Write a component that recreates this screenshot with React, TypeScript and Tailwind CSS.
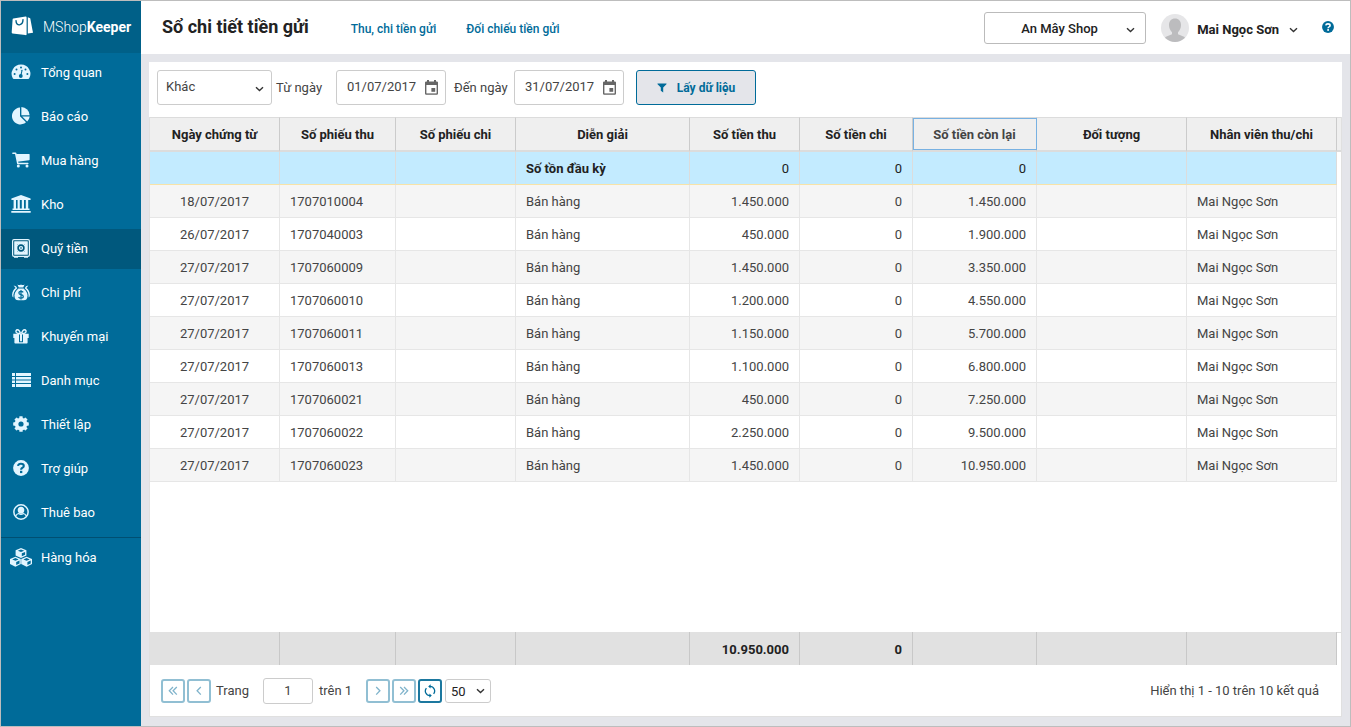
import React, { useState } from "react";

type IconProps = { className?: string };

const ICE = "#e2f5ff";
const NAVY = "#006b99";

function LogoIcon() {
  return (
    <svg width="22" height="20" viewBox="0 0 22 20" aria-hidden="true">
      <path d="M2.4 2.6 L14.6 0.6 Q15.6 0.5 15.6 1.5 V18.2 Q15.6 19.4 14.4 19.1 L1.5 17.4 Q0.6 17.2 0.7 16.2 L1.6 3.6 Q1.7 2.7 2.4 2.6Z" fill="#fff" />
      <path d="M5 4.6 C5 10.8 12 10 12 3.6" fill="none" stroke="#006088" strokeWidth="1.4" strokeLinecap="round" />
      <path d="M16.8 1.3 L19.2 2.2 L22 16.8 L16.8 17.6Z" fill="#fff" />
    </svg>
  );
}

function GaugeIcon() {
  return (
    <svg width="20" height="16" viewBox="0 0 20 16" aria-hidden="true">
      <path d="M10 0.5 A9.3 9.3 0 0 0 1.9 14.5 Q2.2 14.9 2.8 14.9 H17.2 Q17.8 14.9 18.1 14.5 A9.3 9.3 0 0 0 10 0.5Z" fill={ICE} />
      <g fill={NAVY}>
        <circle cx="3.6" cy="10" r="1" />
        <circle cx="5.5" cy="5.6" r="1" />
        <circle cx="10" cy="3.6" r="1" />
        <circle cx="14.5" cy="5.6" r="1" />
        <circle cx="16.4" cy="10" r="1" />
        <circle cx="9.8" cy="12" r="1.9" />
      </g>
      <path d="M9.8 12 L11 6.4" stroke={NAVY} strokeWidth="1.1" strokeLinecap="round" />
    </svg>
  );
}

function PieIcon() {
  return (
    <svg width="18" height="18" viewBox="0 0 18 18" fill={ICE} aria-hidden="true">
      <path d="M8 0.6 V9.3 L14 15.2 A8.4 8.4 0 1 1 8 0.6Z" />
      <path d="M9.4 0 A8.4 8.4 0 0 1 17.6 8.2 H9.4Z" />
      <path d="M10.2 9.4 H17.7 A8.4 8.4 0 0 1 15.2 14.4Z" />
    </svg>
  );
}

function CartIcon() {
  return (
    <svg width="18" height="16" viewBox="0 0 18 16" aria-hidden="true">
      <path d="M0.9 1.2 H3.6 L5.8 11.5 H15.8" fill="none" stroke={ICE} strokeWidth="1.5" strokeLinecap="round" strokeLinejoin="round" />
      <path d="M4 1.9 H17 Q17.6 1.9 17.6 2.5 V7.6 Q17.6 8.2 17 8.3 L5.4 9.7Z" fill={ICE} />
      <circle cx="6.3" cy="13.9" r="1.5" fill={ICE} />
      <circle cx="15" cy="13.9" r="1.5" fill={ICE} />
    </svg>
  );
}

function BankIcon() {
  return (
    <svg width="20" height="18" viewBox="0 0 20 18" fill={ICE} aria-hidden="true">
      <path d="M10 0 L19.6 3.6 V5 H0.4 V3.6Z" />
      <path d="M2.6 5 H5 V14 H2.6Z M6.6 5 H8.8 V14 H6.6Z M10.8 5 H13 V14 H10.8Z M14.8 5 H17.2 V14 H14.8Z" />
      <path d="M1.5 13.6 H18.5 V15 H1.5Z M0.3 16 H19.7 V17.8 H0.3Z" />
    </svg>
  );
}

function SafeIcon() {
  return (
    <svg width="18" height="19" viewBox="0 0 18 19" aria-hidden="true">
      <path d="M2 17 H6 V18.8 H2Z M12 17 H16 V18.8 H12Z" fill={ICE} />
      <rect x="0.6" y="0.6" width="16.8" height="16.8" rx="1.4" fill="#00587d" stroke={ICE} strokeWidth="1.2" />
      <rect x="2.2" y="2.2" width="13.6" height="13.6" rx="0.5" fill={ICE} />
      <circle cx="9" cy="9" r="2.9" fill="none" stroke="#00587d" strokeWidth="1.6" />
      <circle cx="9" cy="9" r="0.9" fill="#3d86a6" />
      <path d="M5.4 5.4 L6.4 6.4 M12.6 5.4 L11.6 6.4 M5.4 12.6 L6.4 11.6 M12.6 12.6 L11.6 11.6" stroke="#5c9ab5" strokeWidth="0.8" />
    </svg>
  );
}

function MoneyIcon() {
  return (
    <svg width="18" height="17" viewBox="0 0 18 17" aria-hidden="true">
      <path d="M5.4 0.6 Q7.2 1.6 9 0.6 Q10.8 1.6 12.6 0.6 L11.2 3.5 H6.8Z" fill={ICE} />
      <path d="M6.4 4.4 H11.6 C15 7.2 16.2 10.6 15.2 14 Q14.5 16.2 12 16.3 H6 Q3.5 16.2 2.8 14 C1.8 10.6 3 7.2 6.4 4.4Z" fill={ICE} />
      <path d="M1.6 1.4 L4 2.2 L5.2 4.2 C2.4 6.6 1 9.4 1.4 13.4 Q0 13 0.1 10.6 C0.4 7.4 1.8 5.4 3.6 4.1Z M16.4 1.4 L14 2.2 L12.8 4.2 C15.6 6.6 17 9.4 16.6 13.4 Q18 13 17.9 10.6 C17.6 7.4 16.2 5.4 14.4 4.1Z" fill={ICE} />
      <path d="M11.2 8.4 Q10.6 7.4 9 7.4 Q6.9 7.4 6.9 9 Q6.9 10.4 9 10.7 Q11.3 11 11.3 12.6 Q11.3 14.2 9 14.2 Q7.2 14.2 6.6 13 M9 6 V15.6" fill="none" stroke={NAVY} strokeWidth="1.2" />
    </svg>
  );
}

function GiftIcon() {
  return (
    <svg width="16" height="15" viewBox="0 0 16 15" aria-hidden="true">
      <path d="M7.6 4.6 C6.5 1.8 5.6 0.8 4.6 0.8 C2.9 0.8 2.5 2.6 3.4 3.6 C4.2 4.5 5.8 4.6 7.6 4.6 M8.4 4.6 C9.5 1.8 10.4 0.8 11.4 0.8 C13.1 0.8 13.5 2.6 12.6 3.6 C11.8 4.5 10.2 4.6 8.4 4.6" fill="none" stroke={ICE} strokeWidth="1.4" />
      <path d="M0.3 4.8 H15.7 V9 H14.6 V13.7 Q14.6 14.4 13.7 14.4 H2.3 Q1.4 14.4 1.4 13.7 V9 H0.3Z" fill={ICE} />
      <path d="M6 5.4 H7 V13 H6Z M9 5.4 H10 V13 H9Z M6 12.2 H10 V13.2 H6Z" fill={NAVY} />
    </svg>
  );
}

function ListIcon() {
  return (
    <svg width="19" height="14" viewBox="0 0 19 14" fill={ICE} aria-hidden="true">
      <path d="M0 0 H3 V3 H0Z M4 0 H19 V3 H4Z M0 4 H3 V6.4 H0Z M4 4 H19 V6.4 H4Z M0 7.4 H3 V10 H0Z M4 7.4 H19 V10 H4Z M0 11 H3 V14 H0Z M4 11 H19 V14 H4Z" />
    </svg>
  );
}

function CogIcon() {
  return (
    <svg width="16" height="16" viewBox="0 0 16 16" aria-hidden="true">
      <g fill={ICE}>
        <circle cx="8" cy="8" r="6.3" />
        <rect x="6.3" y="0.2" width="3.4" height="15.6" rx="0.6" />
        <rect x="0.2" y="6.3" width="15.6" height="3.4" rx="0.6" />
        <rect x="6.3" y="0.2" width="3.4" height="15.6" rx="0.6" transform="rotate(45 8 8)" />
        <rect x="6.3" y="0.2" width="3.4" height="15.6" rx="0.6" transform="rotate(-45 8 8)" />
      </g>
      <circle cx="8" cy="8" r="2.6" fill={NAVY} />
    </svg>
  );
}

function QuestionIcon({ size, disc, mark }: { size: number; disc: string; mark: string }) {
  return (
    <svg width={size} height={size} viewBox="0 0 16 16" aria-hidden="true">
      <circle cx="8" cy="8" r="7.9" fill={disc} />
      <path d="M5 5.9 Q5.4 3.8 7.9 3.8 Q10.8 3.8 10.8 6 Q10.8 7.1 9.4 7.8 Q8.1 8.4 8.1 9.8" fill="none" stroke={mark} strokeWidth="2.1" />
      <rect x="7" y="10.8" width="2.3" height="2.3" fill={mark} />
    </svg>
  );
}

function UserIcon() {
  return (
    <svg width="16" height="16" viewBox="0 0 17 17" aria-hidden="true">
      <circle cx="8.5" cy="8.5" r="7.6" fill="none" stroke={ICE} strokeWidth="1.6" />
      <path d="M8.5 3 C10.8 3 12 4.6 12 6.4 C12 8.6 10.6 10.4 8.5 10.4 C6.4 10.4 5 8.6 5 6.4 C5 4.6 6.2 3 8.5 3Z" fill={ICE} />
      <path d="M3 13 C3.4 11.2 4.4 10.3 6 10.1 Q8.5 12 11 10.1 C12.6 10.3 13.6 11.2 14 13" fill="none" stroke={ICE} strokeWidth="1.1" />
    </svg>
  );
}

function Cube({ x, y }: { x: number; y: number }) {
  return (
    <g transform={`translate(${x} ${y})`}>
      <path d="M5.4 0 L10.8 2.2 V7.4 L5.4 10 L0 7.4 V2.2Z" fill={ICE} />
      <path d="M5.4 1.4 L8.6 2.7 L5.4 4 L2.2 2.7Z M6.2 5.3 L9.5 3.9 V6.7 L6.2 8.3Z" fill={NAVY} />
    </g>
  );
}

function CubesIcon() {
  return (
    <svg width="22" height="19" viewBox="0 0 22 19" aria-hidden="true">
      <Cube x={5.6} y={0} />
      <Cube x={0} y={8.7} />
      <Cube x={11.2} y={8.7} />
    </svg>
  );
}

function Chevron({ className = "" }: IconProps) {
  return (
    <svg className={className} width="9" height="6" viewBox="0 0 9 6" aria-hidden="true">
      <path d="M1 1.2 L4.5 4.5 L8 1.2" fill="none" stroke="#333" strokeWidth="1.4" />
    </svg>
  );
}

function CalendarIcon() {
  return (
    <svg width="13" height="15" viewBox="0 0 13 15" aria-hidden="true">
      <path d="M2 0 H4 V1.4 H9 V0 H11 V1.4 H11.8 Q13 1.4 13 2.6 V13.6 Q13 14.8 11.8 14.8 H1.2 Q0 14.8 0 13.6 V2.6 Q0 1.4 1.2 1.4 H2Z" fill="#666" />
      <rect x="1.4" y="5" width="10.2" height="8.4" fill="#fff" />
      <rect x="6.4" y="8" width="3.8" height="3.8" fill="#666" />
    </svg>
  );
}

function AngleIcon({ double, flip }: { double?: boolean; flip?: boolean }) {
  return (
    <svg width="10" height="10" viewBox="0 0 10 10" aria-hidden="true">
      <g fill="none" stroke="#7fb3cb" strokeWidth="1.3" transform={flip ? "translate(10 0) scale(-1 1)" : undefined}>
        {double ? <path d="M5 1 L1.3 4.8 L5 8.6 M8.8 1 L5.1 4.8 L8.8 8.6" /> : <path d="M6.8 1 L3.1 4.8 L6.8 8.6" />}
      </g>
    </svg>
  );
}

function RefreshIcon() {
  return (
    <svg width="12" height="14" viewBox="0 0 12 14" aria-hidden="true">
      <path d="M6 2.4 A4.6 4.6 0 0 1 9.6 9.9 M6 11.6 A4.6 4.6 0 0 1 2.4 4.1" fill="none" stroke={NAVY} strokeWidth="1.3" />
      <path d="M6.6 0.2 V4.6 L4.2 2.4Z M5.4 13.8 V9.4 L7.8 11.6Z" fill={NAVY} />
    </svg>
  );
}

const menu = [
  { label: "Tổng quan", icon: <GaugeIcon /> },
  { label: "Báo cáo", icon: <PieIcon /> },
  { label: "Mua hàng", icon: <CartIcon /> },
  { label: "Kho", icon: <BankIcon /> },
  { label: "Quỹ tiền", icon: <SafeIcon />, active: true },
  { label: "Chi phí", icon: <MoneyIcon /> },
  { label: "Khuyến mại", icon: <GiftIcon /> },
  { label: "Danh mục", icon: <ListIcon /> },
  { label: "Thiết lập", icon: <CogIcon /> },
  { label: "Trợ giúp", icon: <QuestionIcon size={16} disc={ICE} mark={NAVY} /> },
  { label: "Thuê bao", icon: <UserIcon /> },
];

const columns = [
  "Ngày chứng từ",
  "Số phiếu thu",
  "Số phiếu chi",
  "Diễn giải",
  "Số tiền thu",
  "Số tiền chi",
  "Số tiền còn lại",
  "Đối tượng",
  "Nhân viên thu/chi",
];

const rows = [
  ["18/07/2017", "1707010004", "1.450.000", "1.450.000"],
  ["26/07/2017", "1707040003", "450.000", "1.900.000"],
  ["27/07/2017", "1707060009", "1.450.000", "3.350.000"],
  ["27/07/2017", "1707060010", "1.200.000", "4.550.000"],
  ["27/07/2017", "1707060011", "1.150.000", "5.700.000"],
  ["27/07/2017", "1707060013", "1.100.000", "6.800.000"],
  ["27/07/2017", "1707060021", "450.000", "7.250.000"],
  ["27/07/2017", "1707060022", "2.250.000", "9.500.000"],
  ["27/07/2017", "1707060023", "1.450.000", "10.950.000"],
];

const alignments = [
  "text-center",
  "text-left",
  "text-left",
  "text-left",
  "text-right",
  "text-right",
  "text-right",
  "text-left",
  "text-left",
];

function Columns() {
  return (
    <colgroup>
      <col className="w-[130px]" />
      <col className="w-[116px]" />
      <col className="w-[120px]" />
      <col className="w-[174px]" />
      <col className="w-[110px]" />
      <col className="w-[113px]" />
      <col className="w-[124px]" />
      <col className="w-[150px]" />
      <col className="w-[150px]" />
      <col className="w-[4px]" />
    </colgroup>
  );
}

function NavItem({ label, icon, active }: { label: string; icon: React.ReactNode; active?: boolean }) {
  return (
    <a
      href="#"
      aria-current={active ? "page" : undefined}
      className={`flex h-10 items-center gap-2 pl-2 text-[13px] text-white ${active ? "bg-[#00587d]" : ""}`}
    >
      <span className="flex w-6 justify-center pb-0.5">{icon}</span>
      {label}
    </a>
  );
}

function DateField({ label, initial }: { label: string; initial: string }) {
  const [value, setValue] = useState(initial);
  return (
    <div className="flex h-[35px] w-[110px] items-center rounded-[3px] border border-[#ccc] bg-white pr-[7px] pl-2.5">
      <input
        aria-label={label}
        value={value}
        onChange={(e) => setValue(e.target.value)}
        className="min-w-0 flex-1 bg-transparent pb-0.5 text-[13px] text-[#444] outline-none"
      />
      <button type="button" aria-label={`Chọn ${label.toLowerCase()}`}>
        <CalendarIcon />
      </button>
    </div>
  );
}

function PagerButton({ label, strong, children }: { label: string; strong?: boolean; children: React.ReactNode }) {
  return (
    <button
      type="button"
      aria-label={label}
      className={`flex size-6 items-center justify-center rounded-[3px] border-2 bg-white ${strong ? "border-[#1c789f]" : "border-[#91bfd3]"}`}
    >
      {children}
    </button>
  );
}

export default function App() {
  const [page, setPage] = useState("1");
  return (
    <div className="flex min-h-screen border border-[#bdbdbd] bg-[#e4e5ea] font-['Roboto','Noto_Sans',sans-serif] text-[13px] text-[#444]">
      <aside className="flex w-[140px] shrink-0 flex-col bg-[#006b99]">
        <a href="#" className="flex h-[52px] items-center gap-2.5 bg-[#006088] pb-0.5 pl-2.5 text-[14px] text-white">
          <LogoIcon />
          <span className="pt-0.5 font-light">
            MShop<b className="font-bold">Keeper</b>
          </span>
        </a>
        <nav className="flex flex-col gap-1">
          {menu.map((item) => (
            <NavItem key={item.label} {...item} />
          ))}
          <div className="border-t border-[#004f72]">
            <NavItem label="Hàng hóa" icon={<CubesIcon />} />
          </div>
        </nav>
      </aside>

      <div className="flex min-w-0 flex-1 flex-col">
        <header className="flex h-[53px] shrink-0 items-center bg-white pr-4 pl-[21px]">
          <h1 className="pb-0.5 text-[18px] font-bold text-[#222]">Sổ chi tiết tiền gửi</h1>
          <div className="ml-[42px] flex gap-[30px] pt-0.5 text-[12px] font-medium text-[#006b99]">
            <a href="#">Thu, chi tiền gửi</a>
            <a href="#">Đối chiếu tiền gửi</a>
          </div>
          <div className="ml-auto flex items-center">
            <div className="relative flex items-center">
              <select aria-label="Cửa hàng" className="h-8 w-[162px] appearance-none rounded-[3px] border border-[#bbb] bg-white pt-0.5 pl-9 font-medium text-[#222]">
                <option>An Mây Shop</option>
              </select>
              <Chevron className="pointer-events-none absolute top-[15px] right-[11px]" />
            </div>
            <svg className="ml-[15px]" width="28" height="28" viewBox="0 0 28 28" role="img" aria-label="Ảnh đại diện">
              <circle cx="14" cy="14" r="14" fill="#e6e6e8" />
              <path d="M14 4.6 C17.6 4.6 20 7.2 20 11 C20 14 18.8 16.6 17 18.2 V20.2 L23.6 23 Q24 23.4 23.4 24.3 A14 14 0 0 1 4.6 24.3 Q4 23.4 4.4 23 L11 20.2 V18.2 C9.2 16.6 8 14 8 11 C8 7.2 10.4 4.6 14 4.6Z" fill="#bcbcbe" />
            </svg>
            <button type="button" className="ml-2 flex items-center gap-2.5 pt-1 font-bold text-[#222]">
              Mai Ngọc Sơn
              <Chevron />
            </button>
            <button type="button" aria-label="Trợ giúp" className="ml-6 pb-0.5">
              <QuestionIcon size={12} disc={NAVY} mark="#fff" />
            </button>
          </div>
        </header>

        <main className="flex flex-1 flex-col px-2 pt-2 pb-[9px]">
          <section className="flex flex-1 flex-col bg-white">
            <form className="flex h-[55px] items-center px-2 pb-1" onSubmit={(e) => e.preventDefault()}>
              <div className="relative flex items-center">
                <select aria-label="Kỳ báo cáo" className="h-[35px] w-[115px] appearance-none rounded-[3px] border border-[#ccc] bg-white pb-0.5 pl-2 text-[#444]">
                  <option>Khác</option>
                </select>
                <Chevron className="pointer-events-none absolute top-4 right-2" />
              </div>
              <span className="w-16 pl-1">Từ ngày</span>
              <DateField label="Từ ngày" initial="01/07/2017" />
              <span className="w-[68px] pl-2">Đến ngày</span>
              <DateField label="Đến ngày" initial="31/07/2017" />
              <button
                type="submit"
                className="ml-3 flex h-[35px] w-[120px] items-center justify-center gap-2.5 rounded-[3px] border border-[#006b99] bg-[#e4e5ea] text-[12px] font-bold text-[#006b99]"
              >
                <svg width="10" height="10" viewBox="0 0 10 10" aria-hidden="true">
                  <path d="M0.6 0.4 H9.4 Q9.8 0.9 9.4 1.3 L6.2 4.6 V9.6 L3.8 7.8 V4.6 L0.6 1.3 Q0.2 0.9 0.6 0.4Z" fill={NAVY} />
                </svg>
                Lấy dữ liệu
              </button>
            </form>

            <div className="flex-1 border-x border-[#e0e0e0]">
              <table className="w-full table-fixed border-separate border-spacing-0">
                <Columns />
                <thead>
                  <tr className="h-[35px] bg-[#efefef] text-[#222]">
                    {columns.map((name, i) => (
                      <th
                        key={name}
                        scope="col"
                        className={`relative border-t border-r border-b-2 border-t-[#dcdcdc] border-r-[#cbcbcb] border-b-[#dcdcdc] px-0 pt-0.5 pb-0 font-bold ${i === 6 ? "text-[#444]" : ""}`}
                      >
                        {name}
                        {i === 6 && <span className="absolute inset-y-0 -right-px left-0 border border-[#78b1e2]" />}
                      </th>
                    ))}
                    <td className="border-t border-b-2 border-[#dcdcdc] p-0" />
                  </tr>
                </thead>
                <tbody>
                  <tr className="h-[33px] text-[#222]">
                    {["", "", "", "Số tồn đầu kỳ", "0", "0", "0", "", ""].map((cell, i) => (
                      <td
                        key={i}
                        className={`border-r border-b border-r-[#dcdcdc] border-b-[#f7e3a8] bg-[#c3ebff] px-2.5 pt-0.5 pb-0 ${alignments[i]} ${i === 3 ? "font-bold" : ""}`}
                      >
                        {cell}
                      </td>
                    ))}
                    <td className="p-0" />
                  </tr>
                  {rows.map(([date, code, income, balance], r) => (
                    <tr key={code} className="h-[33px]">
                      {[date, code, "", "Bán hàng", income, "0", balance, "", "Mai Ngọc Sơn"].map((cell, i) => (
                        <td
                          key={i}
                          className={`border-r border-b border-[#e6e6e6] px-2.5 pt-0.5 pb-0 ${alignments[i]} ${r % 2 === 0 ? "bg-[#f5f5f5]" : "bg-white"}`}
                        >
                          {cell}
                        </td>
                      ))}
                      <td className="p-0" />
                    </tr>
                  ))}
                </tbody>
              </table>
            </div>

            <div className="border-x border-[#e0e0e0]">
              <table className="w-full table-fixed border-separate border-spacing-0" aria-label="Tổng cộng">
                <Columns />
                <tbody>
                  <tr className="h-[33px] font-bold text-[#222]">
                    {["", "", "", "", "10.950.000", "0", "", "", ""].map((cell, i) => (
                      <td key={i} className="border-r border-[#c8c8c8] bg-[#e1e1e1] px-2.5 pt-0.5 pb-0 text-right">
                        {cell}
                      </td>
                    ))}
                    <td className="border-t border-[#dcdcdc] p-0" />
                  </tr>
                </tbody>
              </table>
            </div>

            <footer className="flex h-[52px] items-center border-x border-b border-[#e0e0e0] pr-[22px] pl-[11px]">
              <div className="flex gap-0.5">
                <PagerButton label="Trang đầu"><AngleIcon double /></PagerButton>
                <PagerButton label="Trang trước"><AngleIcon /></PagerButton>
              </div>
              <label htmlFor="page" className="w-[52px] pl-[5px]">Trang</label>
              <input
                id="page"
                value={page}
                onChange={(e) => setPage(e.target.value)}
                className="h-[26px] w-[50px] rounded-[3px] border border-[#ccc] text-center outline-none"
              />
              <span className="w-[53px] pl-1.5">trên 1</span>
              <div className="flex gap-0.5">
                <PagerButton label="Trang sau"><AngleIcon flip /></PagerButton>
                <PagerButton label="Trang cuối"><AngleIcon double flip /></PagerButton>
                <PagerButton label="Tải lại" strong><RefreshIcon /></PagerButton>
              </div>
              <div className="relative ml-[3px] flex items-center">
                <select aria-label="Số dòng mỗi trang" className="h-6 w-[46px] appearance-none rounded-[3px] border border-[#ccc] bg-white pt-0.5 pl-[5px] text-[#222]">
                  <option>50</option>
                </select>
                <Chevron className="pointer-events-none absolute right-1.5" />
              </div>
              <span className="ml-auto">Hiển thị 1 - 10 trên 10 kết quả</span>
            </footer>
          </section>
        </main>
      </div>
    </div>
  );
}
